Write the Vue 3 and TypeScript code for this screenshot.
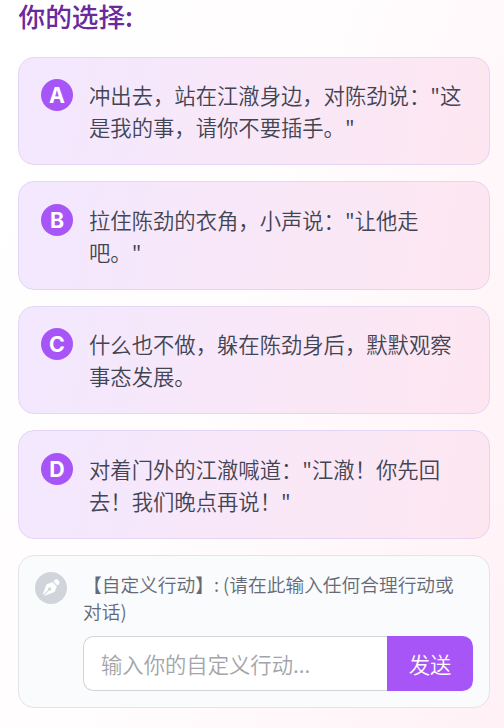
<script setup lang="ts">
import { ref } from 'vue'

interface Choice {
  id: string
  text: string
}

const choices: Choice[] = [
  { id: 'A', text: '冲出去，站在江澈身边，对陈劲说："这是我的事，请你不要插手。"' },
  { id: 'B', text: '拉住陈劲的衣角，小声说："让他走吧。"' },
  { id: 'C', text: '什么也不做，躲在陈劲身后，默默观察事态发展。' },
  { id: 'D', text: '对着门外的江澈喊道："江澈！你先回去！我们晚点再说！"' },
]

const action = ref('')
</script>

<template>
  <main class="page">
    <h2 class="title">你的选择:</h2>
    <div class="list">
      <div v-for="choice in choices" :key="choice.id" class="choice" role="button" tabindex="0">
        <span class="badge">{{ choice.id }}</span>
        <p class="choice-text">{{ choice.text }}</p>
      </div>
      <section class="custom">
        <span class="pen">
          <svg viewBox="0 0 32 32" width="32" height="32" aria-hidden="true">
            <path fill="#fff" d="M17.6 10.2 L21.8 14.4 L20 19 Q19.7 19.9 18.7 20.3 L9.6 23.8 L9.1 23.4 L14 18.4 A1.6 1.6 0 1 0 13.3 17.7 L8.3 22.7 L7.9 22.2 L11.1 13.3 Q11.4 12.4 12.3 12 Z" />
            <path fill="#fff" d="M18.4 9.4 L20 7.6 Q21.3 6.4 22.7 7.6 L24 8.9 Q25.2 10.3 24.1 11.7 L22.6 13.6 Z" />
          </svg>
        </span>
        <div class="custom-body">
          <p class="label">【自定义行动】: (请在此输入任何合理行动或对话)</p>
          <form class="entry" @submit.prevent>
            <input v-model="action" class="field" type="text" placeholder="输入你的自定义行动..." />
            <button class="send" type="submit">发送</button>
          </form>
        </div>
      </section>
    </div>
  </main>
</template>

<style>
body {
  margin: 0;
}
</style>

<style scoped>
.page {
  box-sizing: border-box;
  height: 728px;
  padding: 0 14px 0 18px;
  background: linear-gradient(110deg, #fff 0%, #fffdfe 45%, #fff1f6 100%);
  font-family: 'Noto Sans CJK SC', sans-serif;
  font-size: 21.33px;
  font-weight: 350;
  color: #414453;
}
.title {
  margin: 0 0 25.9px;
  padding-left: 0.5px;
  font-size: 26.67px;
  line-height: 31px;
  font-weight: 500;
  color: #6b2a9c;
}
.list {
  display: flex;
  flex-direction: column;
  gap: 16px;
}
.choice {
  box-sizing: border-box;
  height: 108.5px;
  display: flex;
  align-items: flex-start;
  gap: 16px;
  padding: 21.4px 22px;
  border: 1px solid #e5d5f4;
  border-radius: 16px;
  background: linear-gradient(100deg, #f3e8ff, #fce7f3 85%, #fde6f0);
}
.badge {
  flex: none;
  width: 32px;
  height: 32px;
  border-radius: 50%;
  background: #a855f7;
  color: #fff;
  font-family: Inter, sans-serif;
  font-size: 21.33px;
  line-height: 33px;
  font-weight: 700;
  text-align: center;
}
.choice-text {
  margin: 0;
  line-height: 32px;
}
.custom {
  box-sizing: border-box;
  height: 153px;
  display: flex;
  gap: 16px;
  padding: 16px;
  border: 1px solid #e2e4ea;
  border-radius: 16px;
  background: #f9fbfd;
}
.pen {
  flex: none;
  width: 32px;
  height: 32px;
  border-radius: 50%;
  background: #d1d5db;
}
.pen svg {
  display: block;
}
.custom-body {
  flex: 1;
  min-width: 0;
}
.label {
  margin: -0.6px 0 11.2px;
  padding-right: 14px;
  font-size: 18.72px;
  line-height: 26.67px;
  color: #666a76;
}
.entry {
  display: flex;
  height: 55px;
}
.field {
  box-sizing: border-box;
  flex: 1;
  min-width: 0;
  padding: 0 17px;
  border: 1px solid #d1d5db;
  border-right: 0;
  border-radius: 10.5px 0 0 10.5px;
  background: #fff;
  font: inherit;
  color: inherit;
  outline: none;
}
.field::placeholder {
  color: #a3a5aa;
  opacity: 1;
}
.send {
  width: 86px;
  padding: 0;
  border: 0;
  border-radius: 0 10.5px 10.5px 0;
  background: #a855f7;
  color: #fff;
  font: inherit;
}
</style>
